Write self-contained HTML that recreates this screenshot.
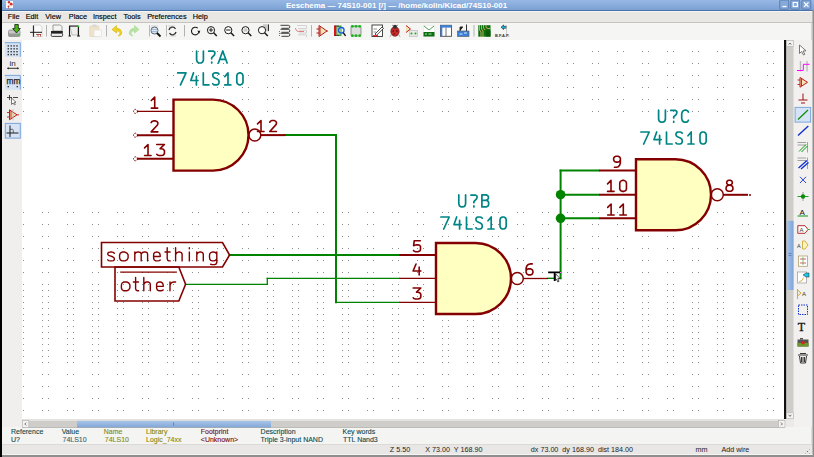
<!DOCTYPE html>
<html><head><meta charset="utf-8"><style>
*{margin:0;padding:0;box-sizing:border-box}
html,body{width:814px;height:457px;overflow:hidden;background:#f2f1f0;font-family:"Liberation Sans",sans-serif}
.abs{position:absolute}
#title{left:0;top:0;width:814px;height:11px;background:linear-gradient(#98b8e5,#7aa1d3);border-bottom:1px solid #4a72aa}
#menubar{left:0;top:11px;width:814px;height:12px;background:#e8e7e4;border-top:1px solid #f6f5f2;border-bottom:1px solid #c6c4c0}
#toolbar{left:0;top:23px;width:814px;height:17px;background:#f5f5f3}
#leftbar{left:0;top:40px;width:22px;height:387px;background:#f0efed}
#canvas{left:22px;top:40px;width:762px;height:379px;background:#fff}
#rightbar{left:794px;top:40px;width:20px;height:387px;background:#f2f1f0}
#msg{left:0;top:427px;width:814px;height:17px;background:#f4f4f2}
#status{left:0;top:444px;width:814px;height:13px;background:#e8e7e5;border-top:1px solid #dcdad7}
.menu{position:absolute;top:11.5px;font-size:7.3px;color:#000;line-height:9px;opacity:0.99;-webkit-text-stroke:0.15px #000}
.mt{position:absolute;font-size:7px;line-height:8px;white-space:nowrap;-webkit-text-stroke:0.12px currentColor}
.st{position:absolute;top:445px;font-size:7.2px;line-height:9px;color:#222;white-space:nowrap}
</style></head><body>
<div id="title" class="abs"></div>
<div class="abs" style="left:0;top:0;width:2px;height:457px;background:#000;z-index:5"></div>
<div class="abs" style="left:6px;top:1px;width:7px;height:7px;background:#fafafa"></div>
<div class="abs" style="left:286px;top:1px;font-size:7.93px;line-height:9px;color:#fff;font-weight:bold;white-space:nowrap">Eeschema — 74S10-001 [/] — /home/kolin/Kicad/74S10-001</div>
<div id="menubar" class="abs"></div>
<div class="menu" style="left:7.7px">File</div>
<div class="menu" style="left:25.7px">Edit</div>
<div class="menu" style="left:45.3px">View</div>
<div class="menu" style="left:68.8px">Place</div>
<div class="menu" style="left:93px">Inspect</div>
<div class="menu" style="left:123.6px">Tools</div>
<div class="menu" style="left:147.2px">Preferences</div>
<div class="menu" style="left:192.7px">Help</div>
<div id="toolbar" class="abs"></div>
<div id="leftbar" class="abs"></div>
<div id="rightbar" class="abs"></div>
<div id="canvas" class="abs"></div>
<div class="abs" style="left:784px;top:40px;width:2px;height:380px;background:#111"></div>
<div id="msg" class="abs"></div>
<div id="status" class="abs"></div>
<div class="mt" style="left:11px;top:427.7px;color:#0e4c50">Reference</div>
<div class="mt" style="left:11px;top:435.7px;color:#0e4c50">U?</div>
<div class="mt" style="left:61.7px;top:427.7px;color:#0e4c50">Value</div>
<div class="mt" style="left:62.5px;top:435.7px;color:#3a6870">74LS10</div>
<div class="mt" style="left:103.7px;top:427.7px;color:#8a8a10">Name</div>
<div class="mt" style="left:104.8px;top:435.7px;color:#8a8a10">74LS10</div>
<div class="mt" style="left:146px;top:427.7px;color:#8a8a10">Library</div>
<div class="mt" style="left:146px;top:435.7px;color:#8a8a10">Logic_74xx</div>
<div class="mt" style="left:200.8px;top:427.7px;color:#7a1010">Footprint</div>
<div class="mt" style="left:200.8px;top:435.7px;color:#7a1010">&lt;Unknown&gt;</div>
<div class="mt" style="left:260.6px;top:427.7px;color:#0e4c50">Description</div>
<div class="mt" style="left:260.6px;top:435.7px;color:#0e4c50">Triple 3-input NAND</div>
<div class="mt" style="left:342.5px;top:427.7px;color:#0e4c50">Key words</div>
<div class="mt" style="left:343px;top:435.7px;color:#0e4c50">TTL Nand3</div>
<div class="st" style="left:389.8px">Z 5.50</div>
<div class="st" style="left:425.2px">X 73.00&nbsp; Y 168.90</div>
<div class="st" style="left:530.8px">dx 73.00&nbsp; dy 168.90&nbsp; dist 184.00</div>
<div class="st" style="left:695.5px">mm</div>
<div class="st" style="left:721.4px">Add wire</div>

<svg class="abs" style="left:0;top:0" width="814" height="457" viewBox="0 0 814 457">
<defs><pattern id="gp" x="0" y="0" width="25" height="1" patternUnits="userSpaceOnUse"><rect x="17" y="0" width="1" height="1" fill="#8c8c8c"/><rect x="23" y="0" width="1" height="1" fill="#8c8c8c"/></pattern></defs>
<rect x="22" y="51" width="762" height="1" fill="url(#gp)"/>
<rect x="22" y="63" width="762" height="1" fill="url(#gp)"/>
<rect x="22" y="75" width="762" height="1" fill="url(#gp)"/>
<rect x="22" y="87" width="762" height="1" fill="url(#gp)"/>
<rect x="22" y="99" width="762" height="1" fill="url(#gp)"/>
<rect x="22" y="111" width="762" height="1" fill="url(#gp)"/>
<rect x="22" y="212" width="762" height="1" fill="url(#gp)"/>
<rect x="22" y="224" width="762" height="1" fill="url(#gp)"/>
<rect x="22" y="236" width="762" height="1" fill="url(#gp)"/>
<rect x="22" y="248" width="762" height="1" fill="url(#gp)"/>
<rect x="22" y="260" width="762" height="1" fill="url(#gp)"/>
<rect x="22" y="272" width="762" height="1" fill="url(#gp)"/>
<rect x="22" y="284" width="762" height="1" fill="url(#gp)"/>
<rect x="22" y="290" width="762" height="1" fill="url(#gp)"/>
<rect x="22" y="296" width="762" height="1" fill="url(#gp)"/>
<rect x="22" y="302" width="762" height="1" fill="url(#gp)"/>
<rect x="22" y="308" width="762" height="1" fill="url(#gp)"/>
<rect x="22" y="314" width="762" height="1" fill="url(#gp)"/>
<rect x="22" y="320" width="762" height="1" fill="url(#gp)"/>
<rect x="22" y="326" width="762" height="1" fill="url(#gp)"/>
<rect x="22" y="332" width="762" height="1" fill="url(#gp)"/>
<rect x="22" y="338" width="762" height="1" fill="url(#gp)"/>
<rect x="22" y="344" width="762" height="1" fill="url(#gp)"/>
<rect x="22" y="350" width="762" height="1" fill="url(#gp)"/>
<rect x="22" y="356" width="762" height="1" fill="url(#gp)"/>
<rect x="22" y="362" width="762" height="1" fill="url(#gp)"/>
<rect x="22" y="374" width="762" height="1" fill="url(#gp)"/>
<rect x="22" y="386" width="762" height="1" fill="url(#gp)"/>
<rect x="22" y="398" width="762" height="1" fill="url(#gp)"/>
<rect x="22" y="410" width="762" height="1" fill="url(#gp)"/>
<line x1="284.5" y1="135" x2="336" y2="135" stroke="#008400" stroke-width="2" stroke-linecap="square"/>
<line x1="336" y1="135" x2="336" y2="302.3" stroke="#008400" stroke-width="2" stroke-linecap="square"/>
<line x1="336" y1="302.3" x2="399.4" y2="302.3" stroke="#008400" stroke-width="1.3" stroke-linecap="square"/>
<line x1="229.6" y1="255" x2="399.4" y2="255" stroke="#008400" stroke-width="2" stroke-linecap="square"/>
<line x1="185.5" y1="284.3" x2="267.3" y2="284.3" stroke="#008400" stroke-width="1.3" stroke-linecap="square"/>
<line x1="267.3" y1="284.3" x2="267.3" y2="278.3" stroke="#008400" stroke-width="1.3" stroke-linecap="square"/>
<line x1="267.3" y1="278.3" x2="399.4" y2="278.3" stroke="#008400" stroke-width="1.3" stroke-linecap="square"/>
<line x1="548" y1="278.3" x2="560.6" y2="278.3" stroke="#008400" stroke-width="1.4" stroke-linecap="square"/>
<line x1="560.6" y1="170.6" x2="560.6" y2="278.3" stroke="#008400" stroke-width="2" stroke-linecap="square"/>
<line x1="560.6" y1="170.6" x2="599" y2="170.6" stroke="#008400" stroke-width="2" stroke-linecap="square"/>
<line x1="560.6" y1="194.7" x2="599" y2="194.7" stroke="#008400" stroke-width="2" stroke-linecap="square"/>
<line x1="560.6" y1="218.3" x2="599" y2="218.3" stroke="#008400" stroke-width="2" stroke-linecap="square"/>
<circle cx="560.6" cy="194.7" r="4.8" fill="#008400"/><circle cx="560.6" cy="218.3" r="4.8" fill="#008400"/>
<line x1="136.9" y1="111.39999999999999" x2="173.5" y2="111.39999999999999" stroke="#840000" stroke-width="1.3"/>
<line x1="136.9" y1="135.2" x2="173.5" y2="135.2" stroke="#840000" stroke-width="2"/>
<line x1="136.9" y1="158.8" x2="173.5" y2="158.8" stroke="#840000" stroke-width="2"/>
<path d="M173.5 99.6 H213.0 A35.5 35.5 0 0 1 213.0 170.6 H173.5 Z" fill="#ffffc2" stroke="#840000" stroke-width="2.4"/>
<circle cx="254.8" cy="135.1" r="6" fill="none" stroke="#840000" stroke-width="1.5"/>
<line x1="260.8" y1="135.1" x2="285.5" y2="135.1" stroke="#840000" stroke-width="2"/>
<g fill="none" stroke="#840000" stroke-width="1.6" stroke-linejoin="round" stroke-linecap="round"><path transform="translate(150.29 108.10) scale(1.08 0.88)" d="M0.9 -8.6L4.1 -12.5V0M0.9 0H6.9" vector-effect="non-scaling-stroke"/></g>
<g fill="none" stroke="#840000" stroke-width="1.6" stroke-linejoin="round" stroke-linecap="round"><path transform="translate(150.18 131.90) scale(1.08 0.88)" d="M0.9 -10.5L1.6 -11.8L3 -12.5H4.9L6.3 -11.8L7.1 -10.4V-9L6.5 -7.5L0.9 0H7.1" vector-effect="non-scaling-stroke"/></g>
<g fill="none" stroke="#840000" stroke-width="1.6" stroke-linejoin="round" stroke-linecap="round"><path transform="translate(143.59 155.50) scale(1.08 0.88)" d="M0.9 -8.6L4.1 -12.5V0M0.9 0H6.9" vector-effect="non-scaling-stroke"/><path transform="translate(155.80 155.50) scale(1.08 0.88)" d="M0.9 -12.5H8L4 -7.8H5.4L7 -7L8 -5.4V-2.3L7.2 -0.7L5.6 0H3L1.6 -0.5L0.9 -1.4" vector-effect="non-scaling-stroke"/></g>
<g fill="none" stroke="#840000" stroke-width="1.6" stroke-linejoin="round" stroke-linecap="round"><path transform="translate(256.58 131.50) scale(1.08 0.88)" d="M0.9 -8.6L4.1 -12.5V0M0.9 0H6.9" vector-effect="non-scaling-stroke"/><path transform="translate(268.78 131.50) scale(1.08 0.88)" d="M0.9 -10.5L1.6 -11.8L3 -12.5H4.9L6.3 -11.8L7.1 -10.4V-9L6.5 -7.5L0.9 0H7.1" vector-effect="non-scaling-stroke"/></g>
<g fill="none" stroke="#008484" stroke-width="1.7" stroke-linejoin="round" stroke-linecap="round"><path transform="translate(195.70 63.00) scale(1.0 0.96)" d="M0.9 -12.5V-3.2L1.5 -1.2L2.8 -0.2L4 0H4.6L5.8 -0.2L7.1 -1.2L7.7 -3.2V-12.5" vector-effect="non-scaling-stroke"/><path transform="translate(207.80 63.00) scale(1.0 0.96)" d="M0.9 -12.3H5.6L7 -11.2V-9.4L6.3 -8L3.9 -5.6V-4.4M3.9 -1V0" vector-effect="non-scaling-stroke"/><path transform="translate(217.50 63.00) scale(1.0 0.96)" d="M0.9 0L5.25 -12.5L9.6 0M2.2 -3.7H8.3" vector-effect="non-scaling-stroke"/></g>
<g fill="none" stroke="#008484" stroke-width="1.7" stroke-linejoin="round" stroke-linecap="round"><path transform="translate(176.80 84.90) scale(1.0 0.96)" d="M0.9 -12.5H9.2L3.7 0" vector-effect="non-scaling-stroke"/><path transform="translate(189.90 84.90) scale(1.0 0.96)" d="M3.6 -12.5L0.9 -4.6H8.1M6.5 -8.9V0" vector-effect="non-scaling-stroke"/><path transform="translate(202.40 84.90) scale(1.0 0.96)" d="M0.9 -12.5V0H6.5" vector-effect="non-scaling-stroke"/><path transform="translate(211.80 84.90) scale(1.0 0.96)" d="M7.2 -11.3L6.2 -12.2L4.8 -12.5H3.3L1.9 -12.1L1 -11V-9.4L1.6 -8.2L3 -7.2L5.8 -5.9L6.8 -5L7.2 -3.8V-1.9L6.4 -0.5L4.9 0H3.2L1.8 -0.3L0.9 -1.2" vector-effect="non-scaling-stroke"/><path transform="translate(223.90 84.90) scale(1.0 0.96)" d="M0.9 -8.6L4.1 -12.5V0M0.9 0H6.9" vector-effect="non-scaling-stroke"/><path transform="translate(235.90 84.90) scale(1.0 0.96)" d="M3.2 -12.5H4.8L6.5 -11.4L7.1 -9.6V-2.9L6.5 -1.1L4.8 0H3.2L1.5 -1.1L0.9 -2.9V-9.6L1.5 -11.4Z" vector-effect="non-scaling-stroke"/></g>
<line x1="399.4" y1="255" x2="436" y2="255" stroke="#840000" stroke-width="2"/>
<line x1="399.4" y1="278.3" x2="436" y2="278.3" stroke="#840000" stroke-width="1.3"/>
<line x1="399.4" y1="302.3" x2="436" y2="302.3" stroke="#840000" stroke-width="1.3"/>
<path d="M436 243 H475.5 A35.5 35.5 0 0 1 475.5 314 H436 Z" fill="#ffffc2" stroke="#840000" stroke-width="2.4"/>
<circle cx="517.3" cy="278.5" r="6" fill="none" stroke="#840000" stroke-width="1.5"/>
<line x1="523.3" y1="278.5" x2="548" y2="278.5" stroke="#840000" stroke-width="1.3"/>
<g fill="none" stroke="#840000" stroke-width="1.6" stroke-linejoin="round" stroke-linecap="round"><path transform="translate(412.52 251.70) scale(1.08 0.88)" d="M7.2 -12.5H1.6L1 -6.8L2 -7.4L3.6 -7.8H5L6.5 -7.2L7.4 -5.8V-2.2L6.6 -0.7L5 0H3L1.6 -0.5L0.9 -1.4" vector-effect="non-scaling-stroke"/></g>
<g fill="none" stroke="#840000" stroke-width="1.6" stroke-linejoin="round" stroke-linecap="round"><path transform="translate(412.14 275.00) scale(1.08 0.88)" d="M3.6 -12.5L0.9 -4.6H8.1M6.5 -8.9V0" vector-effect="non-scaling-stroke"/></g>
<g fill="none" stroke="#840000" stroke-width="1.6" stroke-linejoin="round" stroke-linecap="round"><path transform="translate(412.19 299.00) scale(1.08 0.88)" d="M0.9 -12.5H8L4 -7.8H5.4L7 -7L8 -5.4V-2.3L7.2 -0.7L5.6 0H3L1.6 -0.5L0.9 -1.4" vector-effect="non-scaling-stroke"/></g>
<g fill="none" stroke="#840000" stroke-width="1.6" stroke-linejoin="round" stroke-linecap="round"><path transform="translate(525.13 274.90) scale(1.08 0.88)" d="M6.6 -12.5H4.6L2.8 -11.8L1.5 -10L0.9 -7.5V-3L1.5 -1.1L2.9 0H4.9L6.5 -0.8L7.2 -2.5V-4.4L6.5 -6L4.9 -6.9H3L1.7 -6.2L0.9 -4.6" vector-effect="non-scaling-stroke"/></g>
<g fill="none" stroke="#008484" stroke-width="1.7" stroke-linejoin="round" stroke-linecap="round"><path transform="translate(457.90 206.90) scale(1.0 0.96)" d="M0.9 -12.5V-3.2L1.5 -1.2L2.8 -0.2L4 0H4.6L5.8 -0.2L7.1 -1.2L7.7 -3.2V-12.5" vector-effect="non-scaling-stroke"/><path transform="translate(470.00 206.90) scale(1.0 0.96)" d="M0.9 -12.3H5.6L7 -11.2V-9.4L6.3 -8L3.9 -5.6V-4.4M3.9 -1V0" vector-effect="non-scaling-stroke"/><path transform="translate(481.00 206.90) scale(1.0 0.96)" d="M0.9 0V-12.5H5.2L6.6 -11.9L7.4 -10.6V-9L6.6 -7.6L5.2 -6.9H0.9M5.2 -6.9L6.8 -6.2L7.6 -4.8V-2.1L6.8 -0.7L5.2 0H0.9" vector-effect="non-scaling-stroke"/></g>
<g fill="none" stroke="#008484" stroke-width="1.7" stroke-linejoin="round" stroke-linecap="round"><path transform="translate(440.00 229.00) scale(1.0 0.96)" d="M0.9 -12.5H9.2L3.7 0" vector-effect="non-scaling-stroke"/><path transform="translate(453.10 229.00) scale(1.0 0.96)" d="M3.6 -12.5L0.9 -4.6H8.1M6.5 -8.9V0" vector-effect="non-scaling-stroke"/><path transform="translate(465.60 229.00) scale(1.0 0.96)" d="M0.9 -12.5V0H6.5" vector-effect="non-scaling-stroke"/><path transform="translate(475.00 229.00) scale(1.0 0.96)" d="M7.2 -11.3L6.2 -12.2L4.8 -12.5H3.3L1.9 -12.1L1 -11V-9.4L1.6 -8.2L3 -7.2L5.8 -5.9L6.8 -5L7.2 -3.8V-1.9L6.4 -0.5L4.9 0H3.2L1.8 -0.3L0.9 -1.2" vector-effect="non-scaling-stroke"/><path transform="translate(487.10 229.00) scale(1.0 0.96)" d="M0.9 -8.6L4.1 -12.5V0M0.9 0H6.9" vector-effect="non-scaling-stroke"/><path transform="translate(499.10 229.00) scale(1.0 0.96)" d="M3.2 -12.5H4.8L6.5 -11.4L7.1 -9.6V-2.9L6.5 -1.1L4.8 0H3.2L1.5 -1.1L0.9 -2.9V-9.6L1.5 -11.4Z" vector-effect="non-scaling-stroke"/></g>
<line x1="599.4" y1="170.60000000000002" x2="636" y2="170.60000000000002" stroke="#840000" stroke-width="2"/>
<line x1="599.4" y1="194.70000000000002" x2="636" y2="194.70000000000002" stroke="#840000" stroke-width="2"/>
<line x1="599.4" y1="218.3" x2="636" y2="218.3" stroke="#840000" stroke-width="2"/>
<path d="M636 159.3 H675.5 A35.5 35.5 0 0 1 675.5 230.3 H636 Z" fill="#ffffc2" stroke="#840000" stroke-width="2.4"/>
<circle cx="717.3" cy="194.8" r="6" fill="none" stroke="#840000" stroke-width="1.5"/>
<line x1="723.3" y1="194.8" x2="748" y2="194.8" stroke="#840000" stroke-width="2"/>
<g fill="none" stroke="#840000" stroke-width="1.6" stroke-linejoin="round" stroke-linecap="round"><path transform="translate(612.68 167.30) scale(1.08 0.88)" d="M7.1 -8.3L6.4 -6.7L5 -5.9H3L1.6 -6.7L0.9 -8.3V-10.3L1.6 -11.8L3 -12.5H5L6.4 -11.8L7.1 -10.3V-5L6.5 -2.5L5.2 -0.7L3.5 0H1.6" vector-effect="non-scaling-stroke"/></g>
<g fill="none" stroke="#840000" stroke-width="1.6" stroke-linejoin="round" stroke-linecap="round"><path transform="translate(606.58 191.40) scale(1.08 0.88)" d="M0.9 -8.6L4.1 -12.5V0M0.9 0H6.9" vector-effect="non-scaling-stroke"/><path transform="translate(618.78 191.40) scale(1.08 0.88)" d="M3.2 -12.5H4.8L6.5 -11.4L7.1 -9.6V-2.9L6.5 -1.1L4.8 0H3.2L1.5 -1.1L0.9 -2.9V-9.6L1.5 -11.4Z" vector-effect="non-scaling-stroke"/></g>
<g fill="none" stroke="#840000" stroke-width="1.6" stroke-linejoin="round" stroke-linecap="round"><path transform="translate(606.69 215.00) scale(1.08 0.88)" d="M0.9 -8.6L4.1 -12.5V0M0.9 0H6.9" vector-effect="non-scaling-stroke"/><path transform="translate(618.89 215.00) scale(1.08 0.88)" d="M0.9 -8.6L4.1 -12.5V0M0.9 0H6.9" vector-effect="non-scaling-stroke"/></g>
<g fill="none" stroke="#840000" stroke-width="1.6" stroke-linejoin="round" stroke-linecap="round"><path transform="translate(725.13 191.20) scale(1.08 0.88)" d="M4 -7L2.3 -7.6L1.5 -8.7V-10.6L2.2 -11.9L3.4 -12.5H4.7L5.9 -11.9L6.6 -10.6V-8.7L5.8 -7.6L4.1 -7L2.1 -6.3L1.2 -5.2L0.9 -3.9V-2.2L1.5 -0.8L3 0H5.2L6.6 -0.8L7.2 -2.2V-3.9L6.9 -5.2L6 -6.3L4.1 -7" vector-effect="non-scaling-stroke"/></g>
<g fill="none" stroke="#008484" stroke-width="1.7" stroke-linejoin="round" stroke-linecap="round"><path transform="translate(657.70 122.20) scale(1.0 0.96)" d="M0.9 -12.5V-3.2L1.5 -1.2L2.8 -0.2L4 0H4.6L5.8 -0.2L7.1 -1.2L7.7 -3.2V-12.5" vector-effect="non-scaling-stroke"/><path transform="translate(669.80 122.20) scale(1.0 0.96)" d="M0.9 -12.3H5.6L7 -11.2V-9.4L6.3 -8L3.9 -5.6V-4.4M3.9 -1V0" vector-effect="non-scaling-stroke"/><path transform="translate(680.80 122.20) scale(1.0 0.96)" d="M7.6 -10.5L6.8 -11.9L5.4 -12.5H3.8L2.4 -11.9L1.4 -10.6L0.9 -8.6V-3.9L1.4 -1.9L2.4 -0.6L3.8 0H5.4L6.8 -0.6L7.6 -2" vector-effect="non-scaling-stroke"/></g>
<g fill="none" stroke="#008484" stroke-width="1.7" stroke-linejoin="round" stroke-linecap="round"><path transform="translate(640.00 144.00) scale(1.0 0.96)" d="M0.9 -12.5H9.2L3.7 0" vector-effect="non-scaling-stroke"/><path transform="translate(653.10 144.00) scale(1.0 0.96)" d="M3.6 -12.5L0.9 -4.6H8.1M6.5 -8.9V0" vector-effect="non-scaling-stroke"/><path transform="translate(665.60 144.00) scale(1.0 0.96)" d="M0.9 -12.5V0H6.5" vector-effect="non-scaling-stroke"/><path transform="translate(675.00 144.00) scale(1.0 0.96)" d="M7.2 -11.3L6.2 -12.2L4.8 -12.5H3.3L1.9 -12.1L1 -11V-9.4L1.6 -8.2L3 -7.2L5.8 -5.9L6.8 -5L7.2 -3.8V-1.9L6.4 -0.5L4.9 0H3.2L1.8 -0.3L0.9 -1.2" vector-effect="non-scaling-stroke"/><path transform="translate(687.10 144.00) scale(1.0 0.96)" d="M0.9 -8.6L4.1 -12.5V0M0.9 0H6.9" vector-effect="non-scaling-stroke"/><path transform="translate(699.10 144.00) scale(1.0 0.96)" d="M3.2 -12.5H4.8L6.5 -11.4L7.1 -9.6V-2.9L6.5 -1.1L4.8 0H3.2L1.5 -1.1L0.9 -2.9V-9.6L1.5 -11.4Z" vector-effect="non-scaling-stroke"/></g>
<circle cx="135.5" cy="111.4" r="2" fill="none" stroke="#840000" stroke-width="1" stroke-dasharray="1.5 1"/>
<circle cx="135.5" cy="135.2" r="2" fill="none" stroke="#840000" stroke-width="1" stroke-dasharray="1.5 1"/>
<circle cx="135.5" cy="158.8" r="2" fill="none" stroke="#840000" stroke-width="1" stroke-dasharray="1.5 1"/>
<circle cx="750" cy="195" r="1" fill="#840000"/>
<path d="M101.5 242.5 H222.5 L229.6 255 L222.5 267 H101.5 Z" fill="none" stroke="#840000" stroke-width="1.6"/>
<g fill="none" stroke="#840000" stroke-width="1.4" stroke-linejoin="round" stroke-linecap="round"><path transform="translate(107.00 260.90) scale(1.0 0.94)" d="M7.3 -8.2L6.3 -9.1L4.8 -9.4H3.2L1.7 -9.1L0.8 -8.2V-6.9L1.6 -5.9L3.2 -5.3L5.6 -4.4L6.9 -3.5L7.3 -2.4V-1.3L6.5 -0.3L4.8 0H3L1.5 -0.3L0.8 -1.1" vector-effect="non-scaling-stroke"/><path transform="translate(118.80 260.90) scale(1.0 0.94)" d="M3.3 -9.4H6.1L8.2 -8.3L9.3 -6.3V-3.1L8.2 -1.1L6.1 0H3.3L1.5 -1.1L0.8 -3.1V-6.3L1.5 -8.3Z" vector-effect="non-scaling-stroke"/><path transform="translate(134.00 260.90) scale(1.0 0.94)" d="M0.8 0V-9.4M0.8 -7.2L2 -8.9L3.5 -9.4H5L6.5 -8.9L7.2 -7.4V0M7.2 -7.4L8.4 -8.9L9.9 -9.4H11.5L13 -8.9L13.6 -7.4V0" vector-effect="non-scaling-stroke"/><path transform="translate(152.80 260.90) scale(1.0 0.94)" d="M0.8 -4.7H7.4V-5.9L6.9 -7.9L5.7 -9.1L4.3 -9.4H3.6L2 -9L1 -7.9L0.8 -6.3V-3.1L1.3 -1.3L2.6 -0.2L3.8 0H5L6.4 -0.3L7.4 -0.9" vector-effect="non-scaling-stroke"/><path transform="translate(164.20 260.90) scale(1.0 0.94)" d="M3 -14.1V-2.2L3.6 -0.6L4.8 0H6M0.8 -9.4H5.9" vector-effect="non-scaling-stroke"/><path transform="translate(174.80 260.90) scale(1.0 0.94)" d="M0.8 -14.1V0M0.8 -6.8L2.1 -8.8L3.6 -9.4H5.2L6.6 -8.8L7.3 -7.2V0" vector-effect="non-scaling-stroke"/><path transform="translate(188.50 260.90) scale(1.0 0.94)" d="M0.85 -9.4V0M0.85 -14V-13" vector-effect="non-scaling-stroke"/><path transform="translate(196.00 260.90) scale(1.0 0.94)" d="M0.8 -9.4V0M0.8 -6.8L2.1 -8.8L3.6 -9.4H5.2L6.6 -8.8L7.3 -7.2V0" vector-effect="non-scaling-stroke"/><path transform="translate(208.70 260.90) scale(1.0 0.94)" d="M8.1 -9.4V1.6L7.4 3.3L6 4H3.5L2 3.6M8.1 -7.3L6.8 -8.9L5.3 -9.4H3.6L2 -8.8L1 -7.5L0.8 -5.5V-3.9L1.1 -1.9L2 -0.6L3.6 0H5.3L6.8 -0.6L8.1 -2.2" vector-effect="non-scaling-stroke"/></g>
<path d="M115 267 H178.8 L185.6 284.3 L178.8 301 H115 Z" fill="none" stroke="#840000" stroke-width="1.6"/>
<line x1="120.2" y1="272.2" x2="176.9" y2="272.2" stroke="#840000" stroke-width="1.2"/>
<g fill="none" stroke="#840000" stroke-width="1.4" stroke-linejoin="round" stroke-linecap="round"><path transform="translate(120.60 290.80) scale(1.0 0.94)" d="M3.3 -9.4H6.1L8.2 -8.3L9.3 -6.3V-3.1L8.2 -1.1L6.1 0H3.3L1.5 -1.1L0.8 -3.1V-6.3L1.5 -8.3Z" vector-effect="non-scaling-stroke"/><path transform="translate(132.60 290.80) scale(1.0 0.94)" d="M3 -14.1V-2.2L3.6 -0.6L4.8 0H6M0.8 -9.4H5.9" vector-effect="non-scaling-stroke"/><path transform="translate(143.00 290.80) scale(1.0 0.94)" d="M0.8 -14.1V0M0.8 -6.8L2.1 -8.8L3.6 -9.4H5.2L6.6 -8.8L7.3 -7.2V0" vector-effect="non-scaling-stroke"/><path transform="translate(155.80 290.80) scale(1.0 0.94)" d="M0.8 -4.7H7.4V-5.9L6.9 -7.9L5.7 -9.1L4.3 -9.4H3.6L2 -9L1 -7.9L0.8 -6.3V-3.1L1.3 -1.3L2.6 -0.2L3.8 0H5L6.4 -0.3L7.4 -0.9" vector-effect="non-scaling-stroke"/><path transform="translate(169.20 290.80) scale(1.0 0.94)" d="M0.8 -9.4V0M0.8 -5.5L1.5 -7.8L2.9 -9L4.6 -9.4H6.4" vector-effect="non-scaling-stroke"/></g>
<path d="M555.6 273.8 L560.2 278.6 H557.8 L559 281.4 L557.8 281.9 L556.6 279.2 L555.6 280.4 Z" fill="#fff" stroke="#222" stroke-width="0.8"/>
<path d="M548.2 272.4 H560.5 M554.6 272.4 V281" stroke="#000" stroke-width="1.7"/>
<rect x="560" y="272" width="1" height="1" fill="#ff66ff"/>
<rect x="779.7" y="0" width="9" height="9.2" rx="1" fill="#87a9d8" stroke="#4f74a8" stroke-width="0.8"/>
<rect x="790.7" y="0" width="9" height="9.2" rx="1" fill="#87a9d8" stroke="#4f74a8" stroke-width="0.8"/>
<rect x="801.8" y="0" width="9" height="9.2" rx="1" fill="#87a9d8" stroke="#4f74a8" stroke-width="0.8"/>
<path d="M782.5 6.5 H786.5" stroke="#fff" stroke-width="1.2"/>
<rect x="793.2" y="2.5" width="4.2" height="4" fill="none" stroke="#fff" stroke-width="1.1"/>
<path d="M804 2.3 L808.5 6.8 M808.5 2.3 L804 6.8" stroke="#fff" stroke-width="1.2"/>
<rect x="812.5" y="10" width="1.5" height="447" fill="#8e8e8e"/>
<rect x="0" y="455" width="814" height="2" fill="#8e8e8e"/>
<rect x="2" y="454.3" width="810.5" height="0.7" fill="#fafafa"/>
<rect x="811" y="23" width="0.8" height="17" fill="#d0cec9"/>
<rect x="811" y="427" width="0.8" height="17" fill="#d8d6d2"/>
<rect x="786" y="419" width="8" height="8" fill="#ebeae8"/>
<circle cx="807.5" cy="451.5" r="0.6" fill="#555"/><circle cx="809.5" cy="449.5" r="0.5" fill="#aaa"/><circle cx="805.5" cy="453.5" r="0.5" fill="#aaa"/><circle cx="809.5" cy="453.5" r="0.5" fill="#aaa"/>
<rect x="6" y="1.1" width="7" height="7" fill="#fafafa"/>
<circle cx="9" cy="2.2" r="1.2" fill="#d03030"/><circle cx="11.2" cy="4.2" r="1.4" fill="#d03030"/><circle cx="8.5" cy="6.3" r="0.9" fill="#d03030"/><circle cx="8.5" cy="7.8" r="0.6" fill="#d03030"/>
<rect x="786" y="40" width="8" height="379" fill="#f2f1f0"/>
<rect x="786.5" y="46.5" width="7" height="366" fill="#cfcdc9"/>
<rect x="786.5" y="220.8" width="7" height="69.2" fill="url(#thv)"/>
<rect x="786" y="40" width="0.6" height="379" fill="#9a9894"/>
<path d="M788.5 253.5 H791.5 M788.5 255.5 H791.5" stroke="#4a6a9a" stroke-width="0.6"/>
<rect x="786.5" y="40.5" width="7" height="6" fill="#f4f3f1" stroke="#aaa" stroke-width="0.6"/>
<path d="M788.7 44.6 L790 43 L791.3 44.6" fill="none" stroke="#333" stroke-width="0.7"/>
<rect x="786.5" y="412.8" width="7" height="6" fill="#f4f3f1" stroke="#aaa" stroke-width="0.6"/>
<path d="M788.7 414.8 L790 416.4 L791.3 414.8" fill="none" stroke="#333" stroke-width="0.7"/>
<rect x="22" y="419" width="764" height="8.5" fill="#f2f1f0"/>
<rect x="22" y="419" width="762" height="0.8" fill="#e2e0dc"/>
<rect x="28.8" y="420.6" width="750" height="7" fill="#cfcdc9"/>
<defs><linearGradient id="thh" x1="0" y1="0" x2="0" y2="1"><stop offset="0" stop-color="#a9c5ea"/><stop offset="1" stop-color="#7fa5d6"/></linearGradient><linearGradient id="thv" x1="0" y1="0" x2="1" y2="0"><stop offset="0" stop-color="#a9c5ea"/><stop offset="1" stop-color="#7fa5d6"/></linearGradient></defs>
<rect x="77" y="420.8" width="194" height="7" fill="url(#thh)"/>
<rect x="22" y="427.2" width="763" height="0.6" fill="#a9a7a3"/>
<path d="M173.6 422.5 V425.5" stroke="#4a6a9a" stroke-width="0.7"/>
<rect x="22.5" y="420.6" width="6.3" height="7" fill="#f4f3f1" stroke="#aaa" stroke-width="0.6"/>
<path d="M26.2 422.6 L24.8 424 L26.2 425.4" fill="none" stroke="#333" stroke-width="0.7"/>
<rect x="778.5" y="420.6" width="6.5" height="7" fill="#f4f3f1" stroke="#aaa" stroke-width="0.6"/>
<path d="M781 422.6 L782.4 424 L781 425.4" fill="none" stroke="#333" stroke-width="0.7"/>
<rect x="8.5" y="30" width="11.5" height="6.5" rx="1.5" fill="#c8c8c8" stroke="#8a8a8a" stroke-width="0.8"/>
<rect x="8.5" y="33.5" width="11.5" height="3" fill="#9a9a9a"/>
<circle cx="18.5" cy="34.8" r="0.7" fill="#2ecc2e"/>
<path d="M14.8 24.5 H18.3 V28.5 H20.3 L16.5 33 L12.7 28.5 H14.8 Z" fill="#49b80e" stroke="#1a1a1a" stroke-width="0.8"/>
<path d="M34 25 H40 L42 27 V36.5 H34 Z" fill="#fafafa" stroke="#c8c8c8" stroke-width="0.7"/>
<path d="M33.4 25.5 V36.8 M30 32.3 H42" stroke="#1a1a1a" stroke-width="1"/>
<path d="M36 34.5 H41 M38 34 V36.5 M40.5 34 V36.5" stroke="#a33" stroke-width="0.8"/>
<rect x="46" y="25" width="1" height="11.5" fill="#b4b2ae"/>
<path d="M53 25 H60.5 L62 26.5 V31 H53 Z" fill="#f4f4f4" stroke="#777" stroke-width="0.7"/>
<rect x="51" y="31" width="11.8" height="2.2" fill="#222"/>
<rect x="51.2" y="33.2" width="11.4" height="3.2" rx="1" fill="#f0f0f0" stroke="#222" stroke-width="0.9"/>
<path d="M70 26.5 H78 L77.5 35 L72 35 Z" fill="#eee" stroke="#999" stroke-width="0.6"/>
<path d="M69.5 26 V36 M78.5 27 V36 M68.5 36 H71 M77 36 H80 M69 26 H78.5" stroke="#1a1a1a" stroke-width="1.1"/>
<circle cx="78.5" cy="26.3" r="0.9" fill="#2c2"/>
<rect x="89.8" y="26" width="9" height="10.5" rx="0.8" fill="#efe2c8" stroke="#e0d0b0" stroke-width="0.6"/>
<rect x="92.5" y="24.5" width="4" height="2.5" fill="#d8d8d8"/>
<rect x="94" y="30" width="7.5" height="6.5" fill="#fafafa" stroke="#dcdcdc" stroke-width="0.6"/>
<rect x="106" y="25" width="1" height="11.5" fill="#b4b2ae"/>
<path d="M116.5 25.5 L112 29.5 L116.5 33 V31 Q120 30.5 120 33 Q120 35 118 36 Q122.5 35.5 121.5 31.5 Q120.5 28.3 116.5 28.3 Z" fill="#f2d21b" stroke="#c9a800" stroke-width="0.5"/>
<path d="M134.5 25.5 L139 29.5 L134.5 33 V31 Q131 30.5 131 33 Q131 35 133 36 Q128.5 35.5 129.5 31.5 Q130.5 28.3 134.5 28.3 Z" fill="#b6e3a0" stroke="#9fd48a" stroke-width="0.5"/>
<path d="M149.5 25 V36.5" stroke="#aaa" stroke-width="0.8"/>
<path d="M151 26 H158 M151 28 H157 M156 34 H160" stroke="#bbb" stroke-width="0.6"/>
<circle cx="154.5" cy="30.5" r="3.5" fill="#dbe6f5" stroke="#4a5a6a" stroke-width="0.9"/><path d="M151.5 29.5 H157.5 M151.5 31.5 H157.5" stroke="#8aa0c0" stroke-width="0.6"/>
<path d="M157 33 L160.5 36.5" stroke="#111" stroke-width="1.8"/>
<path d="M166.5 25 V36.5" stroke="#aaa" stroke-width="0.8"/>
<path d="M168 26 H175 M170 36 H176" stroke="#bbb" stroke-width="0.6"/>
<path d="M169 30 A3.5 3.5 0 0 1 175.5 29 M176 32 A3.5 3.5 0 0 1 169.5 33" fill="none" stroke="#333" stroke-width="1.3"/>
<rect x="184" y="25" width="1" height="11.5" fill="#b4b2ae"/>
<path d="M197.8 28.2 A3.8 3.8 0 1 0 198.9 32.2" fill="none" stroke="#1a1a1a" stroke-width="1.1"/>
<path d="M197.3 30.8 L200.3 30.8 L199.3 33.6 Z" fill="#1a1a1a"/>
<circle cx="211" cy="30.2" r="3.6" fill="#fff" stroke="#1a1a1a" stroke-width="1"/><path d="M213.6 32.8 L216.8 36" stroke="#1a1a1a" stroke-width="1.5"/><path d="M208.8 30 H213.2 M211 27.8 V32.2" stroke="#1a1a1a" stroke-width="1"/>
<circle cx="228.3" cy="30.2" r="3.6" fill="#fff" stroke="#1a1a1a" stroke-width="1"/><path d="M230.9 32.8 L234.10000000000002 36" stroke="#1a1a1a" stroke-width="1.5"/><path d="M226.1 30 H230.5" stroke="#1a1a1a" stroke-width="1"/>
<circle cx="245.5" cy="30.2" r="3.6" fill="#fff" stroke="#1a1a1a" stroke-width="1"/><path d="M248.1 32.8 L251.3 36" stroke="#1a1a1a" stroke-width="1.5"/><rect x="243.5" y="28.3" width="4" height="3.4" fill="#ccc"/>
<rect x="263" y="24.3" width="6" height="7" fill="#c8c8c8"/><path d="M268.5 24.5 V31" stroke="#1a1a1a" stroke-width="0.9"/>
<circle cx="262" cy="30.2" r="3.6" fill="#fff" stroke="#1a1a1a" stroke-width="1"/><path d="M264.6 32.8 L267.8 36" stroke="#1a1a1a" stroke-width="1.5"/>
<path d="M280.5 25.3 H288.3 A1.5 1.5 0 0 1 288.3 28.3 H281.5" fill="none" stroke="#2a2a2a" stroke-width="0.9"/>
<path d="M280.5 29.3 H288.3 A1.5 1.5 0 0 1 288.3 32.3 H281.5" fill="none" stroke="#2a2a2a" stroke-width="0.9"/>
<path d="M280.5 33.3 H288.3 A1.5 1.5 0 0 1 288.3 36.3 H281.5" fill="none" stroke="#2a2a2a" stroke-width="0.9"/>
<path d="M279.5 31 V36.5" stroke="#555" stroke-width="0.8" stroke-dasharray="1 1"/>
<path d="M297 25.5 H306.5 V28.5 H298 M299 30.2 H306.5 V33 H299 M298 34.8 H306.5 V37" fill="none" stroke="#cfcfcf" stroke-width="0.9"/>
<path d="M295.5 28 Q296 32 300 31.5 H304" fill="none" stroke="#e37d7d" stroke-width="1"/>
<rect x="311" y="25" width="1" height="11.5" fill="#b4b2ae"/>
<path d="M319 25.5 L327 31 L319 36.5 Z" fill="#f3e3b0" stroke="#b31b1b" stroke-width="1"/>
<path d="M316.5 29 H319 M316.5 33 H319 M327 31 H328 M320 27 V35" stroke="#b31b1b" stroke-width="1"/>
<rect x="334" y="25.5" width="2.5" height="10.5" fill="#d81818"/>
<rect x="336.5" y="25.5" width="5" height="10.5" fill="#3aa03a"/>
<rect x="337.3" y="27" width="3.4" height="7.5" fill="#a8e0a8"/>
<path d="M334.5 26 H339 M334.5 35.5 H339" stroke="#222" stroke-width="0.6"/>
<circle cx="341.3" cy="30.3" r="2.8" fill="none" stroke="#1b5fd9" stroke-width="1.3"/>
<path d="M343.2 32.6 L345.6 35.8" stroke="#111" stroke-width="1.4"/>
<rect x="351" y="26" width="10" height="10" rx="1.5" fill="#ddd" stroke="#555" stroke-width="0.6"/>
<circle cx="352.3" cy="26.3" r="1.4" fill="#19b319"/><circle cx="352.3" cy="35.7" r="1.4" fill="#19b319"/>
<circle cx="356" cy="26.3" r="1.4" fill="#19b319"/><circle cx="356" cy="35.7" r="1.4" fill="#19b319"/>
<circle cx="359.7" cy="26.3" r="1.4" fill="#19b319"/><circle cx="359.7" cy="35.7" r="1.4" fill="#19b319"/>
<rect x="372" y="25" width="10.5" height="11.5" fill="#fff" stroke="#333" stroke-width="0.9"/>
<path d="M373.5 29 H377 M373.5 32 H376" stroke="#666" stroke-width="0.7"/>
<path d="M375 34 L382 27 L383.5 28.3 L376.5 35.3 Z" fill="#fff" stroke="#222" stroke-width="0.8"/>
<path d="M373 35.8 H378" stroke="#e00" stroke-width="1.2"/>
<ellipse cx="395" cy="31.5" rx="4.2" ry="4.8" fill="#c62828" stroke="#5a1010" stroke-width="0.6"/>
<circle cx="395" cy="26.8" r="2" fill="#333"/>
<circle cx="393.3" cy="31" r="0.8" fill="#311"/><circle cx="396.8" cy="31" r="0.8" fill="#311"/><circle cx="394" cy="34" r="0.7" fill="#311"/>
<path d="M389.8 36.5 L391.5 35 M400.2 36.5 L398.5 35 M392 25 L393.5 26 M398 25 L396.5 26" stroke="#444" stroke-width="0.6"/>
<path d="M406 25.5 L410.5 29 L406 32.5" fill="#f3e3b0" stroke="#c02020" stroke-width="1"/>
<rect x="409.5" y="30.5" width="8" height="6" fill="#e8e8e8" stroke="#aaa" stroke-width="0.5"/>
<circle cx="411.5" cy="33.5" r="1" fill="#2a2"/><circle cx="415.5" cy="33.5" r="1" fill="#2a2"/>
<rect x="423.5" y="25.2" width="11" height="11.3" fill="#fff" stroke="#ddd" stroke-width="0.5"/>
<path d="M424 26 L429 30 L434 26" fill="none" stroke="#2a8a2a" stroke-width="0.8"/>
<rect x="423.5" y="32" width="11" height="4.5" fill="#0e6e0e"/>
<path d="M425 34 H427 M428.5 34 H431.5" stroke="#cfe" stroke-width="0.8"/>
<rect x="440.5" y="25.3" width="11" height="11" fill="#fff" stroke="#4a4a4a" stroke-width="0.9"/>
<rect x="440.5" y="25.3" width="11" height="2.3" fill="#3d7fd8"/>
<rect x="440.5" y="25.3" width="1.8" height="11" fill="#3d7fd8"/>
<path d="M446 27.6 V36.3" stroke="#4a4a4a" stroke-width="0.8"/>
<rect x="457.5" y="31" width="11.5" height="5.5" fill="#3d7fd8" stroke="#555" stroke-width="0.6"/>
<path d="M460 31 V27 H463 M466.5 31 V24.5" stroke="#333" stroke-width="1"/>
<path d="M459.5 34 H462.5 M464 33 H467" stroke="#dff" stroke-width="0.9"/>
<rect x="473.5" y="25" width="1" height="11.5" fill="#b4b2ae"/>
<rect x="478.3" y="25.2" width="12.2" height="11.5" fill="#0c6e0c"/>
<path d="M479.5 25 V30 L481 32 V37 M481.5 25 V29 L483 31 V37 M483.5 25 V28 L485 30 M486 25 V27.5 L488 28.5 H490" fill="none" stroke="#e6b878" stroke-width="0.8"/>
<rect x="486" y="30.5" width="4.5" height="6" fill="#0a5a0a"/>
<path d="M501 27.2 L503.5 25 V26.3 H506.5 V28.2 H503.5 V29.5 Z" fill="#18c8e8" stroke="#111" stroke-width="0.6"/>
<path d="M506.5 25 V34" stroke="#bbb" stroke-width="0.7"/>
<text x="495" y="36.6" font-size="4" font-family="Liberation Sans" font-weight="bold" fill="#333">B.F.A.P.</text>
<rect x="4.8" y="42.2" width="16" height="14.599999999999994" fill="#d6e3f4"/><path d="M4.8 42.7 H20.3 V56.8" fill="none" stroke="#7ea6dc" stroke-width="1"/>
<rect x="7.6" y="45.2" width="1.4" height="1.4" fill="#333"/>
<rect x="7.6" y="48.1" width="1.4" height="1.4" fill="#333"/>
<rect x="7.6" y="51.0" width="1.4" height="1.4" fill="#333"/>
<rect x="7.6" y="53.900000000000006" width="1.4" height="1.4" fill="#333"/>
<rect x="10.5" y="45.2" width="1.4" height="1.4" fill="#333"/>
<rect x="10.5" y="48.1" width="1.4" height="1.4" fill="#333"/>
<rect x="10.5" y="51.0" width="1.4" height="1.4" fill="#333"/>
<rect x="10.5" y="53.900000000000006" width="1.4" height="1.4" fill="#333"/>
<rect x="13.399999999999999" y="45.2" width="1.4" height="1.4" fill="#333"/>
<rect x="13.399999999999999" y="48.1" width="1.4" height="1.4" fill="#333"/>
<rect x="13.399999999999999" y="51.0" width="1.4" height="1.4" fill="#333"/>
<rect x="13.399999999999999" y="53.900000000000006" width="1.4" height="1.4" fill="#333"/>
<rect x="16.299999999999997" y="45.2" width="1.4" height="1.4" fill="#333"/>
<rect x="16.299999999999997" y="48.1" width="1.4" height="1.4" fill="#333"/>
<rect x="16.299999999999997" y="51.0" width="1.4" height="1.4" fill="#333"/>
<rect x="16.299999999999997" y="53.900000000000006" width="1.4" height="1.4" fill="#333"/>
<text x="9.4" y="66" font-size="8" font-family="Liberation Sans" fill="#1a1a1a">in</text>
<path d="M7 68.3 H19" stroke="#1a1a1a" stroke-width="0.9"/><path d="M8.5 67.3 V69.3 M17.5 67.3 V69.3" stroke="#1a1a1a" stroke-width="0.6"/>
<rect x="4.8" y="74.9" width="16" height="14.799999999999997" fill="#d6e3f4"/><path d="M4.8 75.4 H20.3 V89.7" fill="none" stroke="#7ea6dc" stroke-width="1"/>
<text x="6.5" y="84" font-size="8.3" font-family="Liberation Sans" fill="#1a1a1a" stroke="#1a1a1a" stroke-width="0.25">mm</text>
<rect x="7.6" y="86" width="1.3" height="1.3" fill="#222"/><rect x="16.6" y="86" width="1.3" height="1.3" fill="#222"/>
<path d="M7 97.5 H12 M9.5 95 V100 M13 97.5 H18" stroke="#333" stroke-width="0.9"/>
<path d="M11.5 98 V104.5 L13 103 L14.5 105 L15.3 104.5 L14.2 102.5 L16 102.3 Z" fill="#fff" stroke="#444" stroke-width="0.7"/>
<path d="M9.5 109.8 L17 114.8 L9.5 119.8 Z" fill="#f3e3b0" stroke="#c01818" stroke-width="1"/>
<path d="M7 112.5 H9.5 M7 117 H9.5 M17 114.8 H19 M11 111 V118.5" stroke="#c01818" stroke-width="0.9"/>
<path d="M13 109 V120.5" stroke="#b8b8b8" stroke-width="0.8"/>
<rect x="4.8" y="122.9" width="16" height="15.699999999999989" fill="#d6e3f4"/><rect x="5.3" y="123.4" width="15" height="14.699999999999989" fill="none" stroke="#7ea6dc" stroke-width="1"/>
<path d="M6.5 133 H18.5 M10 125.5 V137" stroke="#1a1a1a" stroke-width="1"/><path d="M10 129.3 H12.3 Q13.3 129.3 13.3 130.5 V133" fill="none" stroke="#333" stroke-width="0.7"/>
<path d="M799.5 45 V53.5 L801.6 51.5 L803.5 55 L804.8 54.3 L803 51 L806 50.8 Z" fill="#fff" stroke="#555" stroke-width="0.8"/>
<path d="M800.5 61 V71.5 M807 61 V71.5" stroke="#bcbcbc" stroke-width="1.4"/>
<path d="M797 70.5 H803.3 V64.3 H809.5" fill="none" stroke="#ff00ff" stroke-width="1"/>
<path d="M800 77.5 L807.5 82.3 L800 87.2 Z" fill="#f3e3b0" stroke="#c01818" stroke-width="1"/>
<path d="M797.5 80 H800 M797.5 84.5 H800 M801.5 78.5 V86" stroke="#c01818" stroke-width="0.9"/>
<path d="M803 93.5 V100 M798.5 100 H807.5 M801 103 H805" stroke="#a01010" stroke-width="1"/>
<rect x="795.1" y="107.4" width="15.5" height="14.7" fill="#d6e3f4" stroke="#7ea6dc" stroke-width="1"/>
<path d="M798 119.5 L808 110" stroke="#0a8a0a" stroke-width="1.2"/>
<path d="M798 135.5 L808.3 126" stroke="#1030d0" stroke-width="1.4"/>
<path d="M797.5 142.5 H806 M797.5 145 H806 M807.5 142 V152.5" stroke="#999" stroke-width="0.9"/>
<path d="M799 151.5 L806 144.5 M801.5 152 L807.5 146" stroke="#0a9a0a" stroke-width="1"/>
<path d="M797.5 158 H806 M797.5 160.5 H806 M807.5 157.5 V169" stroke="#999" stroke-width="0.9"/>
<path d="M798.5 168 L807 160.5 M801 169 L808.5 162.5" stroke="#1030d0" stroke-width="1.3"/>
<path d="M800 176.8 L806 183 M806 176.8 L800 183" stroke="#1030d0" stroke-width="0.9"/>
<path d="M797.5 196.5 H808.5" stroke="#0a9a0a" stroke-width="0.9"/><path d="M803 192 V201" stroke="#888" stroke-width="0.8"/><circle cx="803" cy="196.5" r="2.2" fill="#0a8a0a"/>
<text x="799.6" y="214.5" font-size="8" font-family="Liberation Sans" fill="#111">A</text>
<path d="M797.5 216 H808" stroke="#0a9a0a" stroke-width="1"/>
<path d="M797.8 225.7 H805 L808 229.5 L805 233.3 H797.8 Z" fill="#fff" stroke="#b01818" stroke-width="0.9"/>
<text x="799.5" y="232" font-size="6" font-family="Liberation Sans" fill="#333">A</text><path d="M808 229.5 H810" stroke="#2a2" stroke-width="0.8"/>
<path d="M802.5 241 H805 L808 245 L805 249 H802.5 Z" fill="#fff3c0" stroke="#c8a020" stroke-width="0.8"/>
<text x="797" y="247.5" font-size="5.5" font-family="Liberation Sans" fill="#333">A</text>
<rect x="798.5" y="256" width="9" height="10.3" fill="#fff" stroke="#b0a070" stroke-width="0.8"/>
<path d="M800 259 H806 M800 263 H806" stroke="#c02020" stroke-width="0.7"/><path d="M803 257 V265" stroke="#2a2" stroke-width="0.6"/>
<rect x="797.5" y="272" width="9" height="11" fill="#fff" stroke="#999" stroke-width="0.7"/>
<path d="M803 275 L806 273 H809 V277 H806 Z" fill="#18c8e8" stroke="#222" stroke-width="0.5"/>
<path d="M799 282 Q803 281 803.5 277.5" fill="none" stroke="#c8a020" stroke-width="0.8"/>
<path d="M797.5 289 V299 M797.5 290 L801 293 L797.5 296" fill="none" stroke="#c8a020" stroke-width="0.9"/>
<text x="802" y="296" font-size="6" font-family="Liberation Sans" fill="#333">A</text>
<rect x="798.5" y="305" width="9" height="9.5" fill="none" stroke="#1030d0" stroke-width="1" stroke-dasharray="1.5 1"/>
<text x="797.8" y="331" font-size="12" font-family="Liberation Serif" fill="#111" stroke="#111" stroke-width="0.3">T</text>
<rect x="797.5" y="339.5" width="11" height="7" fill="#555"/><rect x="797.5" y="343" width="11" height="3.5" fill="#6a9a2a"/>
<circle cx="803" cy="342.8" r="1.8" fill="#e02020"/><rect x="800" y="338" width="3" height="1.5" fill="#555"/>
<path d="M798 355 H808 M799.5 356 L800.5 363 H805.5 L806.5 356 M801.5 357 V362 M803 357 V362 M804.5 357 V362 M800 353.5 H806" fill="none" stroke="#222" stroke-width="0.9"/>
</svg>
</body></html>
